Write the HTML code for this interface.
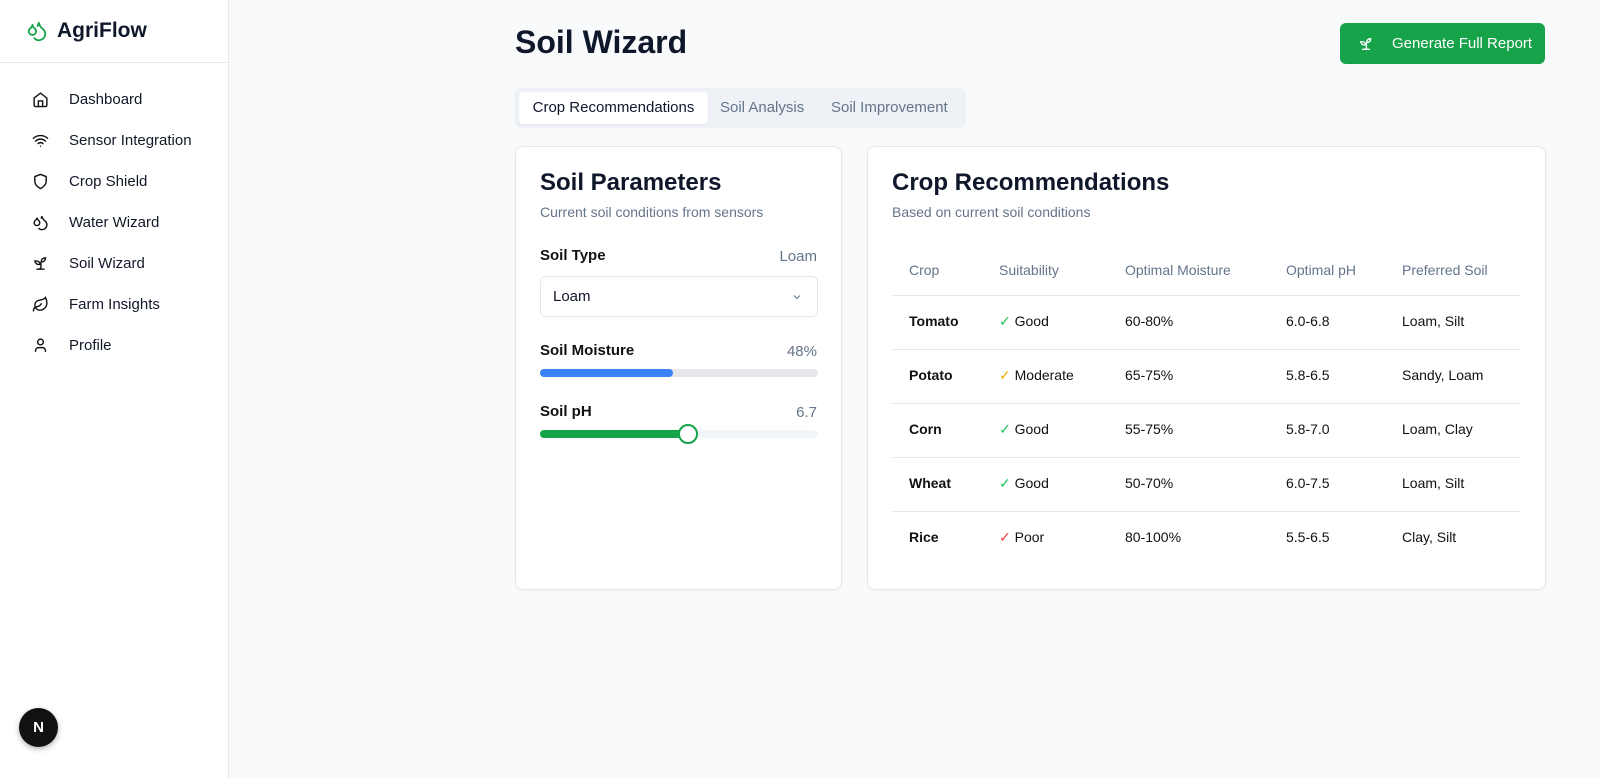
<!DOCTYPE html>
<html><head><meta charset="utf-8"><style>
*{box-sizing:border-box;margin:0;padding:0}
body{width:1600px;height:778px;overflow:hidden;font-family:"Liberation Sans",sans-serif;background:#f8fafc;color:#0f172a;position:relative}
.side{position:absolute;left:0;top:0;width:229px;height:778px;background:#fff;border-right:1px solid #e5e7eb}
.logo{height:63px;border-bottom:1px solid #e5e7eb;display:flex;align-items:center;padding-left:26px;font-size:21px;font-weight:bold;gap:9px}
.nav{position:absolute;left:32px;font-size:15px;display:flex;align-items:center;gap:20px;color:#111827}
.nav svg{width:17px;height:17px}
.nbtn{position:absolute;left:19px;top:708px;width:39px;height:39px;border-radius:50%;background:#111;color:#fff;font-weight:bold;font-size:15px;display:flex;align-items:center;justify-content:center;box-shadow:0 2px 6px rgba(0,0,0,.3)}
h1{position:absolute;left:515px;top:24px;font-size:32px;font-weight:bold}
.gen{position:absolute;left:1340px;top:23px;width:205px;height:41px;background:#16a34a;border-radius:6px;color:#fff;font-size:15px;display:flex;align-items:center;padding-left:18px;gap:18px}
.tabs{position:absolute;left:515px;top:88px;width:451px;height:40px;background:#eef2f6;border-radius:6px}
.tab{position:absolute;top:4px;height:32px;line-height:32px;font-size:15px;color:#64748b}
.card{position:absolute;background:#fff;border:1px solid #e5e7eb;border-radius:8px;box-shadow:0 1px 2px rgba(0,0,0,.04)}
.t{position:absolute;white-space:nowrap}
</style></head><body>
<div class="side">
<div class="logo"><svg width="22" height="22" viewBox="0 0 24 24" fill="none" stroke="#16a34a" stroke-width="2" stroke-linecap="round" stroke-linejoin="round"><path d="M7 16.3c2.2 0 4-1.8 4-4 0-1.2-.6-2.3-1.7-3.2S7.3 6.9 7 5.3c-.3 1.6-1.2 3-2.3 3.8S3 11.1 3 12.3c0 2.2 1.8 4 4 4z"/><path d="M12.6 6.6A11 11 0 0 0 14 3c.5 2.5 2 4.9 4 6.5s3 3.5 3 5.5a6.98 6.98 0 0 1-11.9 5"/></svg>AgriFlow</div>
<div class="nav" style="top:91px"><svg viewBox="0 0 24 24" fill="none" stroke="#111" stroke-width="2"><path d="M3 10l9-7 9 7v10a2 2 0 0 1-2 2H5a2 2 0 0 1-2-2z"/><path d="M9 22v-8h6v8"/></svg>Dashboard</div>
<div class="nav" style="top:132px"><svg viewBox="0 0 24 24" fill="none" stroke="#111" stroke-width="2" stroke-linecap="round"><path d="M2 8.8a15 15 0 0 1 20 0M5 12.9a10 10 0 0 1 14 0M8.5 16.4a5 5 0 0 1 7 0M12 20h.01"/></svg>Sensor Integration</div>
<div class="nav" style="top:173px"><svg viewBox="0 0 24 24" fill="none" stroke="#111" stroke-width="2"><path d="M12 22s8-4 8-10V5l-8-3-8 3v7c0 6 8 10 8 10z"/></svg>Crop Shield</div>
<div class="nav" style="top:214px"><svg viewBox="0 0 24 24" fill="none" stroke="#111" stroke-width="2"><path d="M7 16.3c2.2 0 4-1.8 4-4 0-1.2-.6-2.3-1.7-3.2S7.3 6.9 7 5.3c-.3 1.6-1.2 3-2.3 3.8S3 11.1 3 12.3c0 2.2 1.8 4 4 4z"/><path d="M12.6 6.6A11 11 0 0 0 14 3c.5 2.5 2 4.9 4 6.5s3 3.5 3 5.5a6.98 6.98 0 0 1-11.9 5"/></svg>Water Wizard</div>
<div class="nav" style="top:255px"><svg viewBox="0 0 24 24" fill="none" stroke="#111" stroke-width="2" stroke-linecap="round"><path d="M7 20h10M10 20c5.5-2.5.8-6.4 3-10M9.5 9.4c1.1.8 1.8 2.2 2.3 3.7-2 .4-3.5.4-4.8-.3-1.2-.6-2.3-1.9-3-4.2 2.8-.5 4.4 0 5.5.8zM14.1 6a7 7 0 0 0-1.1 4c1.9-.1 3.3-.6 4.3-1.4 1-1 1.6-2.3 1.7-4.6-2.7.1-4 1-4.9 2z"/></svg>Soil Wizard</div>
<div class="nav" style="top:296px"><svg viewBox="0 0 24 24" fill="none" stroke="#111" stroke-width="2" stroke-linecap="round"><path d="M11 20A7 7 0 0 1 9.8 6.1C15.5 5 17 4.5 19 2c1 2 2 4.2 2 8 0 5.5-4.8 10-10 10z"/><path d="M2 21c0-3 1.9-5.4 5.2-6 2.5-.5 4.8-2 5.8-4"/></svg>Farm Insights</div>
<div class="nav" style="top:337px"><svg viewBox="0 0 24 24" fill="none" stroke="#111" stroke-width="2"><circle cx="12" cy="7" r="4"/><path d="M19 21v-2a4 4 0 0 0-4-4H9a4 4 0 0 0-4 4v2"/></svg>Profile</div>
<div class="nbtn">N</div>
</div>
<h1>Soil Wizard</h1>
<div class="gen"><svg width="16" height="16" viewBox="0 0 24 24" fill="none" stroke="#fff" stroke-width="2" stroke-linecap="round"><path d="M7 20h10M10 20c5.5-2.5.8-6.4 3-10M9.5 9.4c1.1.8 1.8 2.2 2.3 3.7-2 .4-3.5.4-4.8-.3-1.2-.6-2.3-1.9-3-4.2 2.8-.5 4.4 0 5.5.8zM14.1 6a7 7 0 0 0-1.1 4c1.9-.1 3.3-.6 4.3-1.4 1-1 1.6-2.3 1.7-4.6-2.7.1-4 1-4.9 2z"/></svg>Generate Full Report</div>
<div class="tabs">
<div class="tab" style="left:4px;width:189px;background:#fff;border-radius:4px;color:#0f172a;text-align:center;box-shadow:0 1px 2px rgba(0,0,0,.06)">Crop Recommendations</div>
<div class="tab" style="left:205px">Soil Analysis</div>
<div class="tab" style="left:316px">Soil Improvement</div>
</div>
<div class="card" style="left:515px;top:146px;width:327px;height:444px">
<div class="t" style="left:24px;top:22px;font-size:24px;font-weight:bold">Soil Parameters</div>
<div class="t" style="left:24px;top:57px;font-size:14px;color:#64748b">Current soil conditions from sensors</div>
<div class="t" style="left:24px;top:100px;font-size:15px;font-weight:bold;color:#111">Soil Type</div>
<div class="t" style="right:24px;top:101px;font-size:15px;color:#64748b">Loam</div>
<div style="position:absolute;left:24px;top:129px;width:278px;height:41px;border:1px solid #e2e8f0;border-radius:6px;font-size:15px;line-height:39px;padding-left:12px">Loam<svg style="position:absolute;right:14px;top:14px" width="12" height="12" viewBox="0 0 24 24" fill="none" stroke="#64748b" stroke-width="2"><path d="M6 9l6 6 6-6"/></svg></div>
<div class="t" style="left:24px;top:195px;font-size:15px;font-weight:bold;color:#111">Soil Moisture</div>
<div class="t" style="right:24px;top:196px;font-size:15px;color:#64748b">48%</div>
<div style="position:absolute;left:24px;top:222px;width:278px;height:8px;background:#e5e7eb;border-radius:4px"><div style="width:133px;height:8px;background:#3b82f6;border-radius:4px"></div></div>
<div class="t" style="left:24px;top:256px;font-size:15px;font-weight:bold;color:#111">Soil pH</div>
<div class="t" style="right:24px;top:257px;font-size:15px;color:#64748b">6.7</div>
<div style="position:absolute;left:24px;top:283px;width:278px;height:8px;background:#f1f5f9;border-radius:4px"><div style="width:150px;height:8px;background:#16a34a;border-radius:4px"></div><div style="position:absolute;left:138px;top:-6px;width:20px;height:20px;border:2px solid #16a34a;background:#fff;border-radius:50%"></div></div>
</div>
<div class="card" style="left:867px;top:146px;width:679px;height:444px">
<div class="t" style="left:24px;top:22px;font-size:24px;font-weight:bold">Crop Recommendations</div>
<div class="t" style="left:24px;top:57px;font-size:14px;color:#64748b">Based on current soil conditions</div>
<div style="position:absolute;left:24px;top:148px;width:628px;border-top:1px solid #e5e7eb"></div>
<div style="position:absolute;left:24px;top:202px;width:628px;border-top:1px solid #e5e7eb"></div>
<div style="position:absolute;left:24px;top:256px;width:628px;border-top:1px solid #e5e7eb"></div>
<div style="position:absolute;left:24px;top:310px;width:628px;border-top:1px solid #e5e7eb"></div>
<div style="position:absolute;left:24px;top:364px;width:628px;border-top:1px solid #e5e7eb"></div>
<div style="font-size:14px;color:#64748b">
<div class="t" style="left:41px;top:115px">Crop</div><div class="t" style="left:131px;top:115px">Suitability</div><div class="t" style="left:257px;top:115px">Optimal Moisture</div><div class="t" style="left:418px;top:115px">Optimal pH</div><div class="t" style="left:534px;top:115px">Preferred Soil</div>
</div>
<div style="font-size:14px;color:#111">
<div class="t" style="left:41px;top:166px;font-weight:bold">Tomato</div><div class="t" style="left:131px;top:166px"><span style="color:#22c55e">✓</span> Good</div><div class="t" style="left:257px;top:166px">60-80%</div><div class="t" style="left:418px;top:166px">6.0-6.8</div><div class="t" style="left:534px;top:166px">Loam, Silt</div>
<div class="t" style="left:41px;top:220px;font-weight:bold">Potato</div><div class="t" style="left:131px;top:220px"><span style="color:#eab308">✓</span> Moderate</div><div class="t" style="left:257px;top:220px">65-75%</div><div class="t" style="left:418px;top:220px">5.8-6.5</div><div class="t" style="left:534px;top:220px">Sandy, Loam</div>
<div class="t" style="left:41px;top:274px;font-weight:bold">Corn</div><div class="t" style="left:131px;top:274px"><span style="color:#22c55e">✓</span> Good</div><div class="t" style="left:257px;top:274px">55-75%</div><div class="t" style="left:418px;top:274px">5.8-7.0</div><div class="t" style="left:534px;top:274px">Loam, Clay</div>
<div class="t" style="left:41px;top:328px;font-weight:bold">Wheat</div><div class="t" style="left:131px;top:328px"><span style="color:#22c55e">✓</span> Good</div><div class="t" style="left:257px;top:328px">50-70%</div><div class="t" style="left:418px;top:328px">6.0-7.5</div><div class="t" style="left:534px;top:328px">Loam, Silt</div>
<div class="t" style="left:41px;top:382px;font-weight:bold">Rice</div><div class="t" style="left:131px;top:382px"><span style="color:#ef4444">✓</span> Poor</div><div class="t" style="left:257px;top:382px">80-100%</div><div class="t" style="left:418px;top:382px">5.5-6.5</div><div class="t" style="left:534px;top:382px">Clay, Silt</div>
</div>
</div>
</body></html>
